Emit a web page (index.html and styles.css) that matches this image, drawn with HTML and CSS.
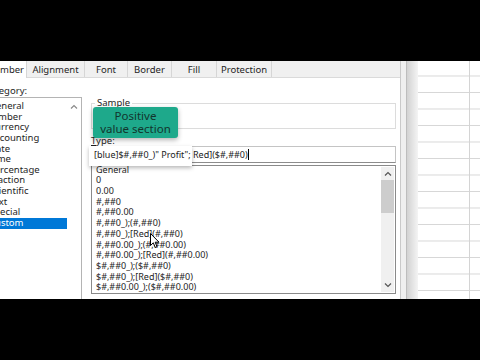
FILE: index.html
```html
<!doctype html>
<html>
<head>
  <title>Format Cells</title>
  <link rel="stylesheet" href="styles.css">
</head>
<body>
  <div class="screen">
    <div class="dialog">
      <div class="tabs">
        <div class="tab tab-active tab-number">Number</div>
        <div class="tab tab-align">Alignment</div>
        <div class="tab tab-font">Font</div>
        <div class="tab tab-border">Border</div>
        <div class="tab tab-fill">Fill</div>
        <div class="tab tab-protect">Protection</div>
      </div>
      <div class="panel">
        <div class="category">
          <div class="cat-label">Category:</div>
          <div class="cat-list">
            <ul class="cat-items">
              <li>General</li>
              <li>Number</li>
              <li>Currency</li>
              <li>Accounting</li>
              <li>Date</li>
              <li>Time</li>
              <li>Percentage</li>
              <li>Fraction</li>
              <li>Scientific</li>
              <li>Text</li>
              <li>Special</li>
              <li class="selected">Custom</li>
            </ul>
            <div class="cat-scroll">
              <svg width="8" height="5" viewBox="0 0 8 5"><path d="M1 4.5L4 1.5L7 4.5" fill="none" stroke="#8a8a8a" stroke-width="1.2"/></svg>
            </div>
          </div>
        </div>
        <div class="format">
          <div class="sample">
            <span class="sample-label">Sample</span>
          </div>
          <div class="type-label"><u>T</u>ype:</div>
          <div class="type-input"><span class="type-text">[blue]$#,##0_)" Profit"; Red]($#,##0)</span><span class="caret"></span></div>
          <div class="code-list">
            <ul class="code-items">
              <li>General</li>
              <li>0</li>
              <li>0.00</li>
              <li>#,##0</li>
              <li>#,##0.00</li>
              <li>#,##0_);(#,##0)</li>
              <li>#,##0_);[Red](#,##0)</li>
              <li>#,##0.00_);(#,##0.00)</li>
              <li>#,##0.00_);[Red](#,##0.00)</li>
              <li>$#,##0_);($#,##0)</li>
              <li>$#,##0_);[Red]($#,##0)</li>
              <li>$#,##0.00_);($#,##0.00)</li>
              <li>$#,##0.00_);[Red]($#,##0.00)</li>
            </ul>
            <div class="scrollbar">
              <svg class="arrow" width="8" height="5" viewBox="0 0 8 5"><path d="M1 4.5L4 1.5L7 4.5" fill="none" stroke="#555" stroke-width="1.2"/></svg>
              <div class="track"><div class="thumb"></div></div>
              <svg class="arrow" width="8" height="5" viewBox="0 0 8 5"><path d="M1 0.5L4 3.5L7 0.5" fill="none" stroke="#555" stroke-width="1.2"/></svg>
            </div>
          </div>
        </div>
      </div>
      <div class="tooltip">
        <p>Positive</p>
        <p>value section</p>
      </div>
      <svg class="cursor" width="10" height="16" viewBox="0 0 10 16">
        <path d="M0.5 0.5L0.5 12.5L3.3 9.8L5.2 14.5L7 13.7L5.2 9.2L9 9.2Z" fill="#fff" stroke="#000" stroke-width="1"/>
      </svg>
    </div>
    <div class="edge"></div>
    <div class="sheet"></div>
  </div>
</body>
</html>
```

FILE: styles.css
```css
body {
  margin: 0;
  background: #000;
  color: #1e1e1e;
  font-family: "Noto Sans", "Open Sans", sans-serif;
  font-size: 9.5px;
}
body * {
  box-sizing: border-box;
}
ul {
  margin: 0;
  padding: 0;
  list-style: none;
}
.screen {
  margin-top: 61px;
  height: 238px;
  display: flex;
  background: #fff;
  overflow: hidden;
}
.dialog {
  width: 400px;
  flex: none;
  display: flex;
  flex-direction: column;
  position: relative;
  overflow: hidden;
  background: #fff;
}
.tabs {
  height: 17px;
  flex: none;
  display: flex;
  background: #f0f0f0;
  border-bottom: 1px solid #dadada;
}
.tab {
  display: flex;
  align-items: center;
  justify-content: center;
  border-right: 1px solid #d6d6d6;
  white-space: nowrap;
}
.tab-active {
  background: #fff;
  height: 17px;
}
.tab-number { width: 42px; margin-left: -15px; }
.tab-align { width: 58px; }
.tab-font { width: 43px; }
.tab-border { width: 44px; }
.tab-fill { width: 45px; }
.tab-protect { width: 55px; }
.panel {
  flex: 1;
  display: flex;
  padding-top: 7px;
  min-height: 0;
}
.category {
  width: 98px;
  margin-left: -16px;
  flex: none;
  display: flex;
  flex-direction: column;
}
.cat-label {
  height: 11px;
  line-height: 11px;
  margin-bottom: 1px;
}
.cat-list {
  flex: 1;
  display: flex;
  border: 1px solid #b4b4b4;
  border-bottom: 0;
}
.cat-items {
  flex: 1;
  padding-top: 3px;
}
.cat-items li {
  height: 10.65px;
  line-height: 10.65px;
  padding-left: 4px;
  white-space: nowrap;
}
.cat-items li:nth-child(2) {
  padding-left: 0;
}
.cat-items li.selected {
  background: #0078d7;
  color: #fff;
}
.cat-scroll {
  width: 14px;
  flex: none;
  display: flex;
  justify-content: center;
  padding-top: 6px;
}
.format {
  flex: 1;
  margin-left: 9px;
  margin-right: 4px;
  padding-top: 18px;
  display: flex;
  flex-direction: column;
  min-height: 0;
}
.sample {
  height: 26px;
  flex: none;
  border: 1px solid #dcdcdc;
}
.sample-label {
  display: inline-block;
  margin: -7px 0 0 3px;
  padding: 0 2px;
  background: #fff;
  line-height: 11px;
  vertical-align: top;
}
.type-label {
  margin-top: 6px;
  height: 11px;
  line-height: 11px;
}
.type-input {
  position: relative;
  margin-top: 0;
  height: 17px;
  flex: none;
  display: flex;
  align-items: center;
  padding-left: 2px;
  border: 1px solid #c4c4c4;
  border-bottom-color: #8c8c8c;
  white-space: nowrap;
  font-size: 9px;
}
.type-input::before {
  content: "";
  position: absolute;
  left: -3px;
  top: -1px;
  width: 103px;
  height: 20px;
  background: #fff;
  box-shadow: 0 2px 4px rgba(0, 0, 0, .28);
}
.type-text {
  position: relative;
  color: #222;
}
.caret {
  position: relative;
  width: 1px;
  height: 11px;
  background: #000;
}
.code-list {
  flex: 1;
  display: flex;
  margin-top: 2px;
  margin-bottom: 5px;
  border: 1px solid #8a8a8a;
  overflow: hidden;
  min-height: 0;
}
.code-items {
  flex: 1;
  margin-top: -1.5px;
  padding-left: 4px;
  font-size: 9px;
}
.code-items li {
  height: 10.73px;
  line-height: 10.73px;
  white-space: nowrap;
}
.scrollbar {
  width: 13px;
  flex: none;
  margin: 1px 1px 1px 0;
  display: flex;
  flex-direction: column;
  align-items: center;
  background: #f0f0f0;
}
.scrollbar .arrow {
  margin: 4px 0;
  flex: none;
}
.track {
  flex: 1;
  width: 100%;
}
.thumb {
  height: 33px;
  background: #cdcdcd;
}
.tooltip {
  position: absolute;
  left: 93px;
  top: 46px;
  width: 85px;
  height: 31px;
  padding-top: 3px;
  border-radius: 3px;
  background: #1ea98b;
  box-shadow: 0 2px 5px rgba(0, 0, 0, .3);
  color: #12352d;
  font-size: 11.5px;
  text-align: center;
}
.tooltip p {
  margin: 0;
  line-height: 12.5px;
}
.cursor {
  position: absolute;
  left: 150px;
  top: 172px;
}
.edge {
  width: 18px;
  flex: none;
  background: linear-gradient(to right, #c9c9c9 0 1px, #efefef 1px 6px, #bdbdbd 6px 7px, #d2d2d2 7px, #f4f4f4 18px);
}
.sheet {
  flex: 1;
  background-color: #fff;
  background-image:
    linear-gradient(to right, transparent 51px, #d4d4d4 51px 52px, transparent 52px),
    linear-gradient(#d6d6d6 1px, transparent 1px);
  background-size: 100% 100%, 100% 16.5px;
  background-position: 0 0, 0 14.5px;
}
```
